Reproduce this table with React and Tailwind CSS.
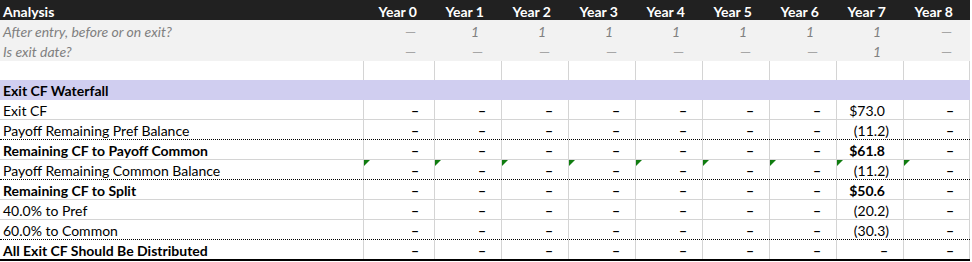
import React from "react";

const YEARS = ["Year 0", "Year 1", "Year 2", "Year 3", "Year 4", "Year 5", "Year 6", "Year 7", "Year 8"];
const GRID = "grid grid-cols-[363px_71px_repeat(8,67px)]";

const AFTER_ENTRY = ["—", "1", "1", "1", "1", "1", "1", "1", "—"];
const IS_EXIT = ["—", "—", "—", "—", "—", "—", "—", "1", "—"];

const ROWS = [
  { label: "Exit CF", y7: "$73.0" },
  { label: "Payoff Remaining Pref Balance", y7: "(11.2)", dotted: true },
  { label: "Remaining CF to Payoff Common", y7: "$61.8", bold: true },
  { label: "Payoff Remaining Common Balance", y7: "(11.2)", dotted: true, flag: true },
  { label: "Remaining CF to Split", y7: "$50.6", bold: true },
  { label: "40.0% to Pref", y7: "(20.2)" },
  { label: "60.0% to Common", y7: "(30.3)", dotted: true },
  { label: "All Exit CF Should Be Distributed", y7: "–", bold: true, last: true },
];

function ValueCell({ value, bold, flag, lastCol }) {
  const isDash = value === "–";
  const isParen = value.startsWith("(");
  const pad = isDash ? "pr-[15px]" : isParen ? "pr-[14px]" : "pr-[18px]";
  return (
    <div className={`relative border-l border-[#d4d4d4] text-right pt-[2px] leading-[17px] ${pad} ${lastCol ? "border-r" : ""} ${bold || isDash ? "font-bold" : ""}`}>
      {flag && <span className="absolute left-0 top-0 w-0 h-0 border-t-[6px] border-r-[6px] border-t-[#107c10] border-r-transparent" />}
      {value}
    </div>
  );
}

function FlagRow({ label, values, height }) {
  return (
    <div className={`${GRID} ${height} leading-[17px] pt-[3px]`}>
      <div className="pl-[3px]">{label}</div>
      {values.map((v, i) =>
        v === "1" ? (
          <div key={i} className="text-right pr-[22px]">1</div>
        ) : (
          <div key={i} className="text-right pr-[18px] not-italic text-[#a6a6a6]">{v}</div>
        )
      )}
    </div>
  );
}

export default function App() {
  return (
    <div className="w-[972px] h-[262px] bg-white font-['Lato',sans-serif] text-[14px] text-black">
      <div className="w-[970px]">
        {/* header */}
        <div className={`${GRID} bg-[#212121] text-white font-bold h-[20px] leading-[17px] pt-[3px]`}>
          <div className="pl-[3px]">Analysis</div>
          {YEARS.map((y) => (
            <div key={y} className="text-right pr-[17px]">{y}</div>
          ))}
        </div>

        {/* flags */}
        <div className="bg-[#f2f2f2] italic text-[#808080]">
          <FlagRow label="After entry, before or on exit?" values={AFTER_ENTRY} height="h-[20px]" />
          <FlagRow label="Is exit date?" values={IS_EXIT} height="h-[21px]" />
        </div>

        {/* spacer row */}
        <div className={`${GRID} h-[19px]`}>
          <div />
          {YEARS.map((y, i) => (
            <div key={y} className={`border-l border-[#d4d4d4] ${i === 8 ? "border-r" : ""}`} />
          ))}
        </div>

        {/* section */}
        <div className="bg-[#d0cef0] h-[20px] pl-[3px] pt-[2px] leading-[17px] font-bold">Exit CF Waterfall</div>

        {ROWS.map((r) => (
          <div
            key={r.label}
            className={`${GRID} border-b ${r.last ? "border-b-2 border-black" : r.dotted ? "border-dotted border-black" : "border-[#d4d4d4]"}`}
          >
            <div className={`pl-[3px] pt-[2px] leading-[17px] ${r.bold ? "font-bold" : ""}`}>{r.label}</div>
            {YEARS.map((y, i) => (
              <ValueCell key={y} value={i === 7 ? r.y7 : "–"} bold={r.bold} flag={r.flag} lastCol={i === 8} />
            ))}
          </div>
        ))}
      </div>
    </div>
  );
}
